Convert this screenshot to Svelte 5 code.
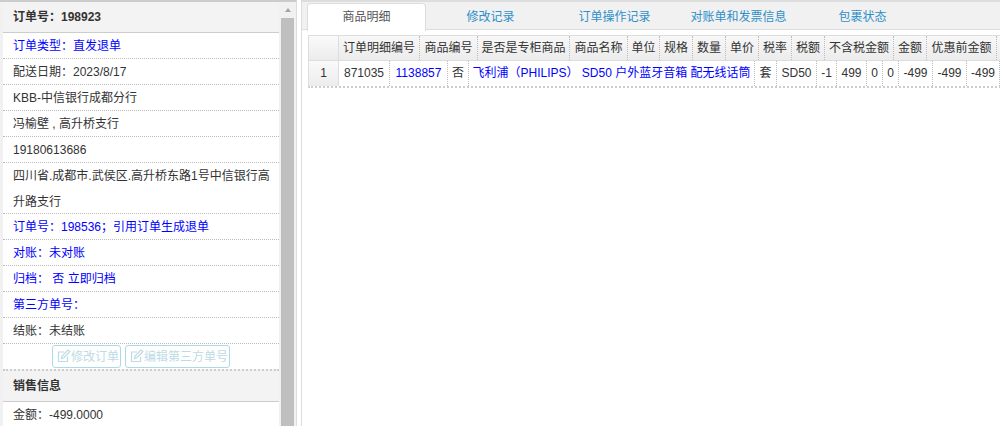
<script>
	const info = [
		{ text: "订单类型：直发退单", blue: true },
		{ text: "配送日期：2023/8/17" },
		{ text: "KBB-中信银行成都分行" },
		{ text: "冯榆壁 , 高升桥支行" },
		{ text: "19180613686" },
		{ text: "四川省.成都市.武侯区.高升桥东路1号中信银行高升路支行", tall: true },
		{ text: "订单号：198536；引用订单生成退单", blue: true },
		{ text: "对账：未对账", blue: true },
		{ text: "归档： 否 立即归档", blue: true },
		{ text: "第三方单号：", blue: true },
		{ text: "结账：未结账" }
	];

	const tabs = ["商品明细", "修改记录", "订单操作记录", "对账单和发票信息", "包裹状态"];

	const headers = [
		["订单明细编号", 81], ["商品编号", 58], ["是否是专柜商品", 92], ["商品名称", 58],
		["单位", 32], ["规格", 33], ["数量", 33], ["单价", 33], ["税率", 33], ["税额", 33],
		["不含税金额", 69], ["金额", 33], ["优惠前金额", 70]
	];

	const cells = [
		["871035", 51], ["1138857", 58, true], ["否", 21],
		["飞利浦（PHILIPS） SD50 户外蓝牙音箱 配无线话筒", 286, true],
		["套", 22], ["SD50", 40], ["-1", 20], ["499", 30], ["0", 16], ["0", 16],
		["-499", 34], ["-499", 34], ["-499", 33]
	];
</script>

<div class="page">
	<aside class="side">
		<div class="side-inner">
			<h3 class="title">订单号：198923</h3>
			<ul class="list">
				{#each info as row}
					<li class:blue={row.blue} class:tall={row.tall}>{row.text}</li>
				{/each}
			</ul>
			<div class="actions">
				<button disabled>
					<svg viewBox="0 0 14 14" width="14" height="14" fill="none" stroke="currentColor" stroke-width="1.2">
						<path d="M10.5 7.5V12.5H1.5V3H7" />
						<path d="M4.5 9.5L5 7L11 1L13 2.5L7 8.5Z" />
					</svg>修改订单
				</button>
				<button disabled>
					<svg viewBox="0 0 14 14" width="14" height="14" fill="none" stroke="currentColor" stroke-width="1.2">
						<path d="M10.5 7.5V12.5H1.5V3H7" />
						<path d="M4.5 9.5L5 7L11 1L13 2.5L7 8.5Z" />
					</svg>编辑第三方单号
				</button>
			</div>
			<h3 class="title second">销售信息</h3>
			<ul class="list">
				<li>金额：-499.0000</li>
			</ul>
		</div>
		<div class="scrollbar">
			<div class="arrow"></div>
			<div class="thumb"></div>
		</div>
	</aside>

	<main class="main">
		<nav class="tabs">
			{#each tabs as tab, i}
				<span class="tab" class:active={i === 0}>{tab}</span>
			{/each}
		</nav>
		<div class="grid">
			<div class="grid-row head">
				<div class="corner"></div>
				{#each headers as [label, width]}
					<div class="cell" style="width: {width}px">{label}</div>
				{/each}
			</div>
			<div class="grid-row body">
				<div class="corner num">1</div>
				{#each cells as [label, width, blue]}
					<div class="cell" class:blue style="width: {width}px">{label}</div>
				{/each}
			</div>
		</div>
	</main>
</div>

<style>
	:global(body) {
		margin: 0;
		background: #fff;
	}

	.page {
		display: flex;
		height: 426px;
		overflow: hidden;
		font-family: "Liberation Sans", "Noto Sans CJK SC", sans-serif;
		font-size: 12px;
		color: #333;
	}

	.side {
		display: flex;
		width: 297px;
		flex: none;
		box-sizing: border-box;
		padding-left: 3px;
		border-top: 2px solid #ccc;
		border-right: 1px solid #ddd;
		overflow: hidden;
		background: #f1f1f1;
	}

	.side-inner {
		width: 276px;
		flex: none;
		background: #fff;
	}

	.title {
		margin: 0;
		height: 30px;
		padding-left: 10px;
		line-height: 30px;
		font-size: 12px;
		font-weight: bold;
		background: #f3f3f3;
		border-bottom: 1px solid #ccc;
	}

	.title.second {
		border-top: 2px dotted #ccc;
	}

	.list {
		margin: 0;
		padding: 0;
		list-style: none;
	}

	.list li {
		box-sizing: border-box;
		height: 26px;
		padding: 0 8px 0 10px;
		line-height: 26px;
		border-bottom: 1px dotted #bbb;
	}

	.list li.tall {
		height: 51px;
	}

	.list li.blue {
		color: #00f;
	}

	.actions {
		display: flex;
		justify-content: center;
		gap: 4px;
		height: 25px;
		padding-top: 1px;
		box-sizing: border-box;
	}

	.actions button {
		display: flex;
		align-items: center;
		height: 23px;
		padding: 0 1px 2px 4px;
		font: inherit;
		color: #bcdbe6;
		background: #fff;
		border: 1px solid #aed9e8;
		border-radius: 3px;
	}

	.scrollbar {
		width: 17px;
		flex: none;
		background: #f1f1f1;
	}

	.arrow {
		width: 0;
		height: 0;
		margin: 6px auto;
		border: 3.5px solid transparent;
		border-top: 0;
		border-bottom: 4px solid #a3a3a3;
	}

	.thumb {
		width: 13px;
		height: 420px;
		margin-left: 2px;
		background: #bfbfbf;
	}

	.main {
		flex: 1;
		min-width: 0;
		margin-left: 4px;
		border-left: 1px solid #ddd;
		border-top: 2px solid #ddd;
	}

	.tabs {
		display: flex;
		gap: 5px;
		height: 27px;
		padding-left: 5px;
		background: #f1f1f1;
		border-bottom: 1px solid #ddd;
	}

	.tab {
		width: 119px;
		flex: none;
		box-sizing: border-box;
		line-height: 31px;
		text-align: center;
		color: #2f8fc8;
	}

	.tab.active {
		height: 28px;
		margin-top: 1px;
		line-height: 27px;
		color: #555;
		background: #fff;
		border: 1px solid #ddd;
		border-bottom: 0;
		border-radius: 4px 4px 0 0;
	}

	.grid {
		margin: 5px 0 0 6px;
		width: 692px;
		border-top: 1px solid #ddd;
		border-bottom: 2px dotted #ccc;
		border-left: 1px solid #ddd;
	}

	.grid-row {
		display: flex;
		height: 24px;
		line-height: 24px;
	}

	.grid-row.body {
		height: 25px;
		line-height: 25px;
	}

	.head {
		background: linear-gradient(#f8f8f8, #ececec);
		border-bottom: 1px solid #ddd;
	}

	.corner {
		width: 29px;
		flex: none;
		text-align: center;
		background: linear-gradient(#fafafa, #ececec);
		border-right: 1px solid #ddd;
	}

	.cell {
		flex: none;
		box-sizing: border-box;
		overflow: hidden;
		white-space: nowrap;
		text-align: center;
		border-right: 1px dotted #bbb;
	}

	.cell.blue {
		color: #00f;
	}
</style>
